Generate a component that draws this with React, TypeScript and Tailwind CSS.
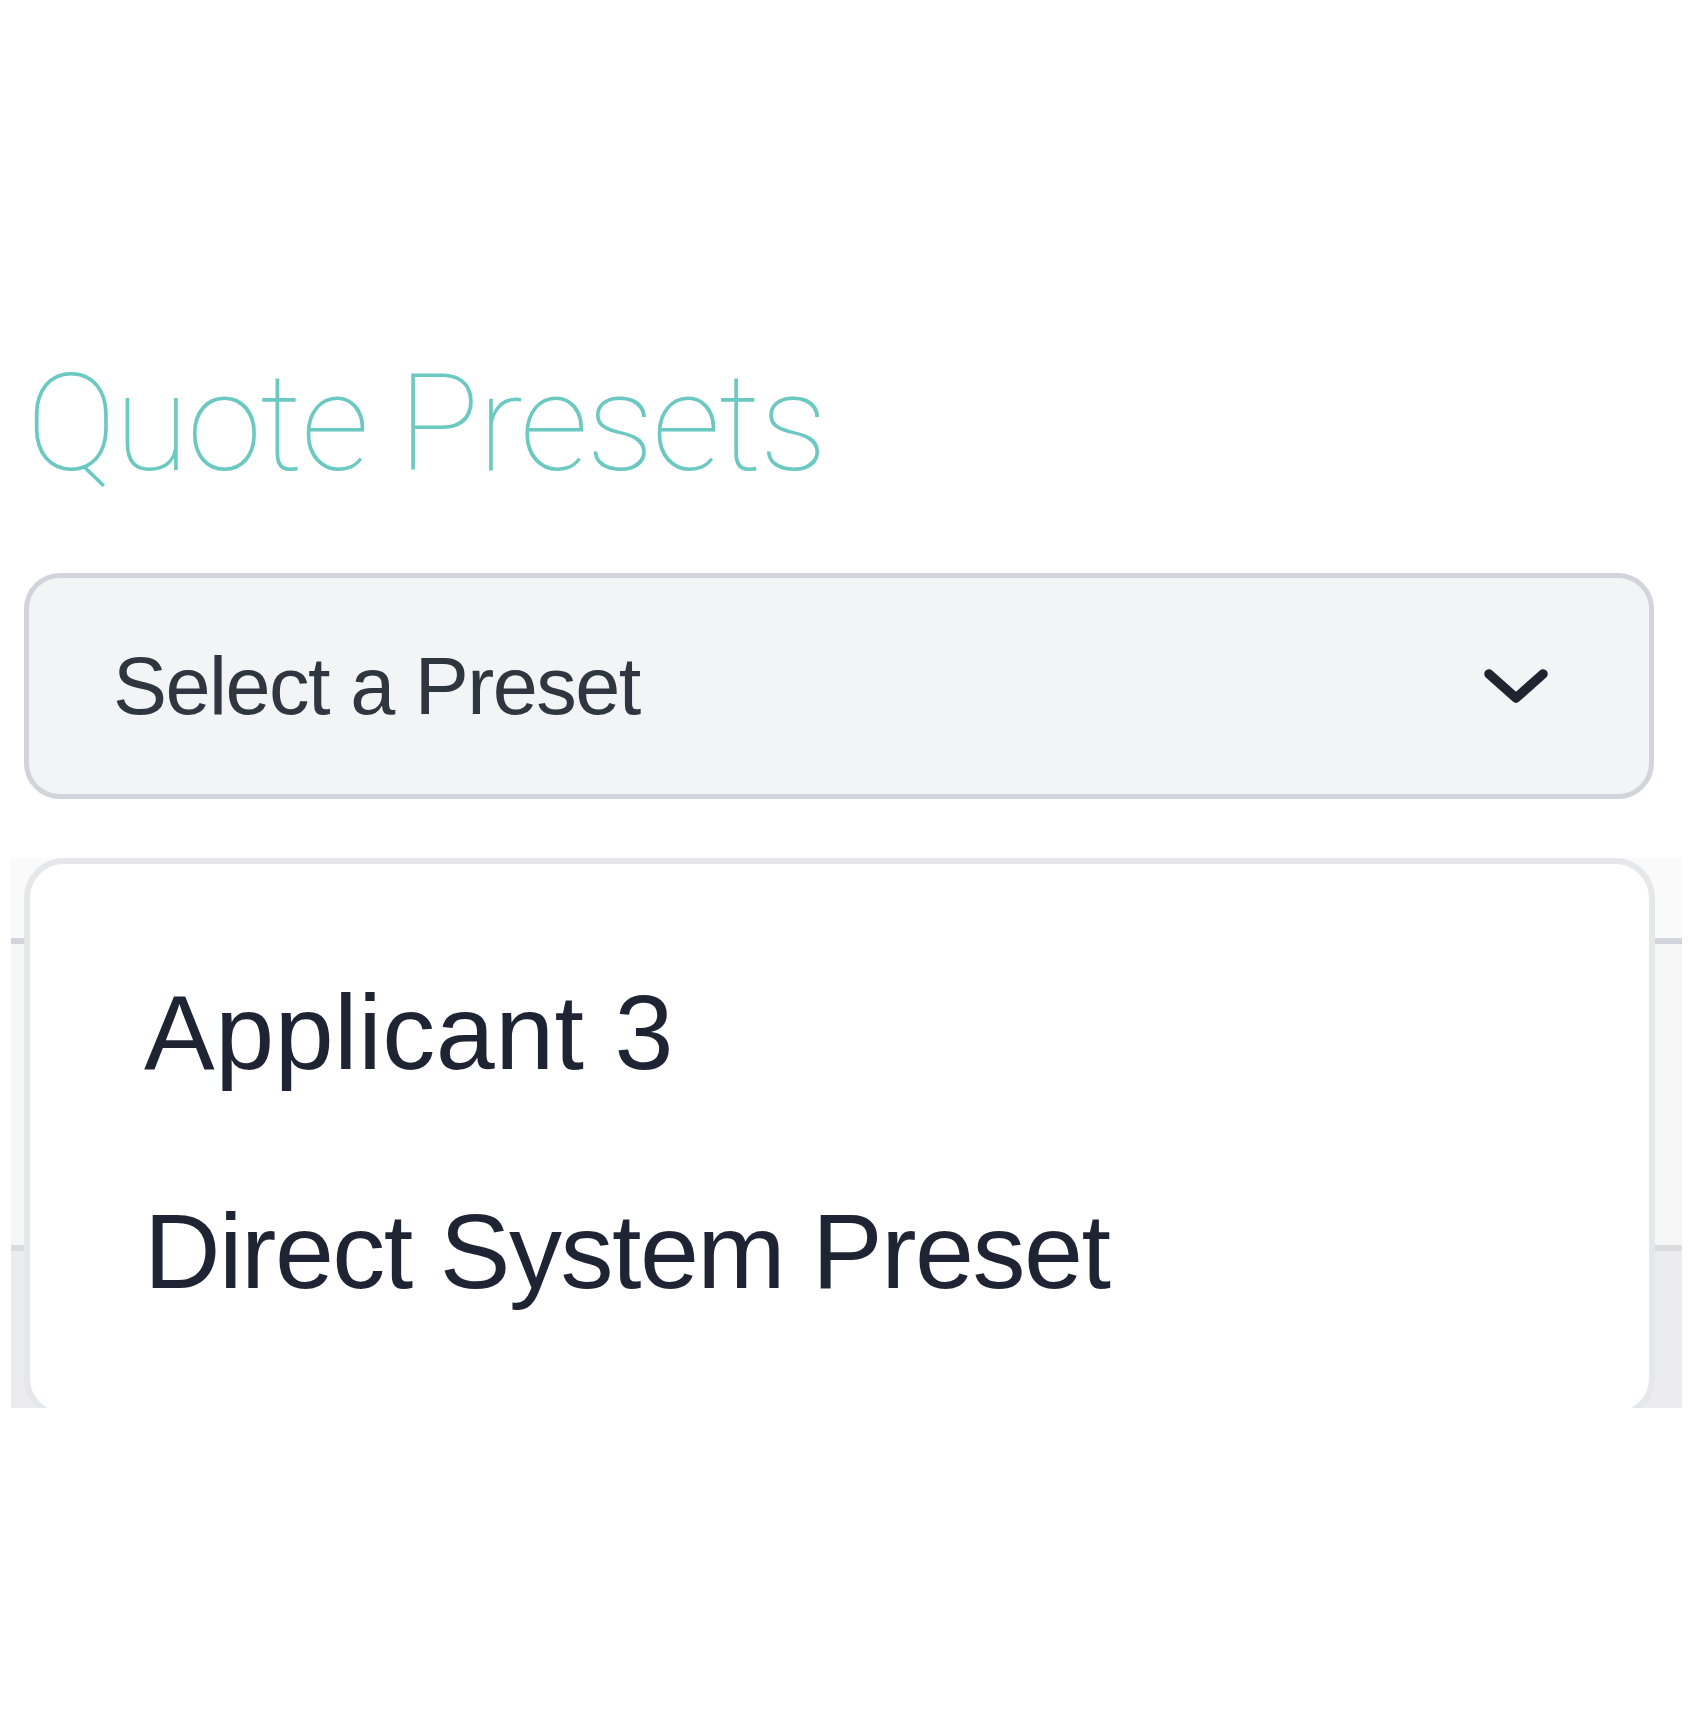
import React from "react";

export default function App() {
  return (
    <div className="w-[1688px] h-[1736px] bg-white">
      <div className="relative h-[1408px] overflow-hidden">
        <div className="pl-[24px] pr-[34px] pt-[356px]">
          <h1
            className="pl-[2px] text-[136px] leading-none font-thin text-[#6cc9c1] tracking-[-2px]"
            style={{ fontFamily: "Roboto, 'Noto Sans', sans-serif" }}
          >
            Quote Presets
          </h1>
          <div className="mt-[81px] h-[226px] rounded-[36px] border-[5px] border-[#d1d5db] bg-[#f3f4f6] flex items-center justify-between pl-[84px] pr-[100px]">
            <span
              className="text-[81px] leading-none text-[#2f3640] tracking-[-1.5px]"
              style={{ fontFamily: "'Liberation Sans', Arial, sans-serif" }}
            >
              Select a Preset
            </span>
            <svg width="66" height="40" viewBox="0 0 66 40" fill="none">
              <path d="M6 8 L33 32 L60 8" stroke="#1f2430" strokeWidth="9.5" strokeLinecap="round" strokeLinejoin="round" />
            </svg>
          </div>
        </div>

        <div className="mt-[59px] ml-[11px] mr-[6px] flex flex-col">
          <div className="h-[80px] bg-[#fafafa]" />
          <div className="h-[6px] bg-[#d1d5db]" />
          <div className="h-[301px] bg-[#f6f6f7]" />
          <div className="h-[6px] bg-[#dcdce0]" />
          <div className="h-[240px] bg-[#ececee]" />
        </div>

        <div className="absolute left-[24px] right-[33px] top-[858px] h-[560px] rounded-[40px] border-[6px] border-[#e5e7eb] bg-white pt-[58px] pl-[114px]">
          <div
            className="flex flex-col text-[106px] leading-none text-[#1e2433]"
            style={{ fontFamily: "'Liberation Sans', Arial, sans-serif" }}
          >
            <div className="h-[219px] flex items-center tracking-[0.5px]">Applicant 3</div>
            <div className="h-[219px] flex items-center tracking-[-1.5px]">Direct System Preset</div>
          </div>
        </div>
      </div>
    </div>
  );
}
